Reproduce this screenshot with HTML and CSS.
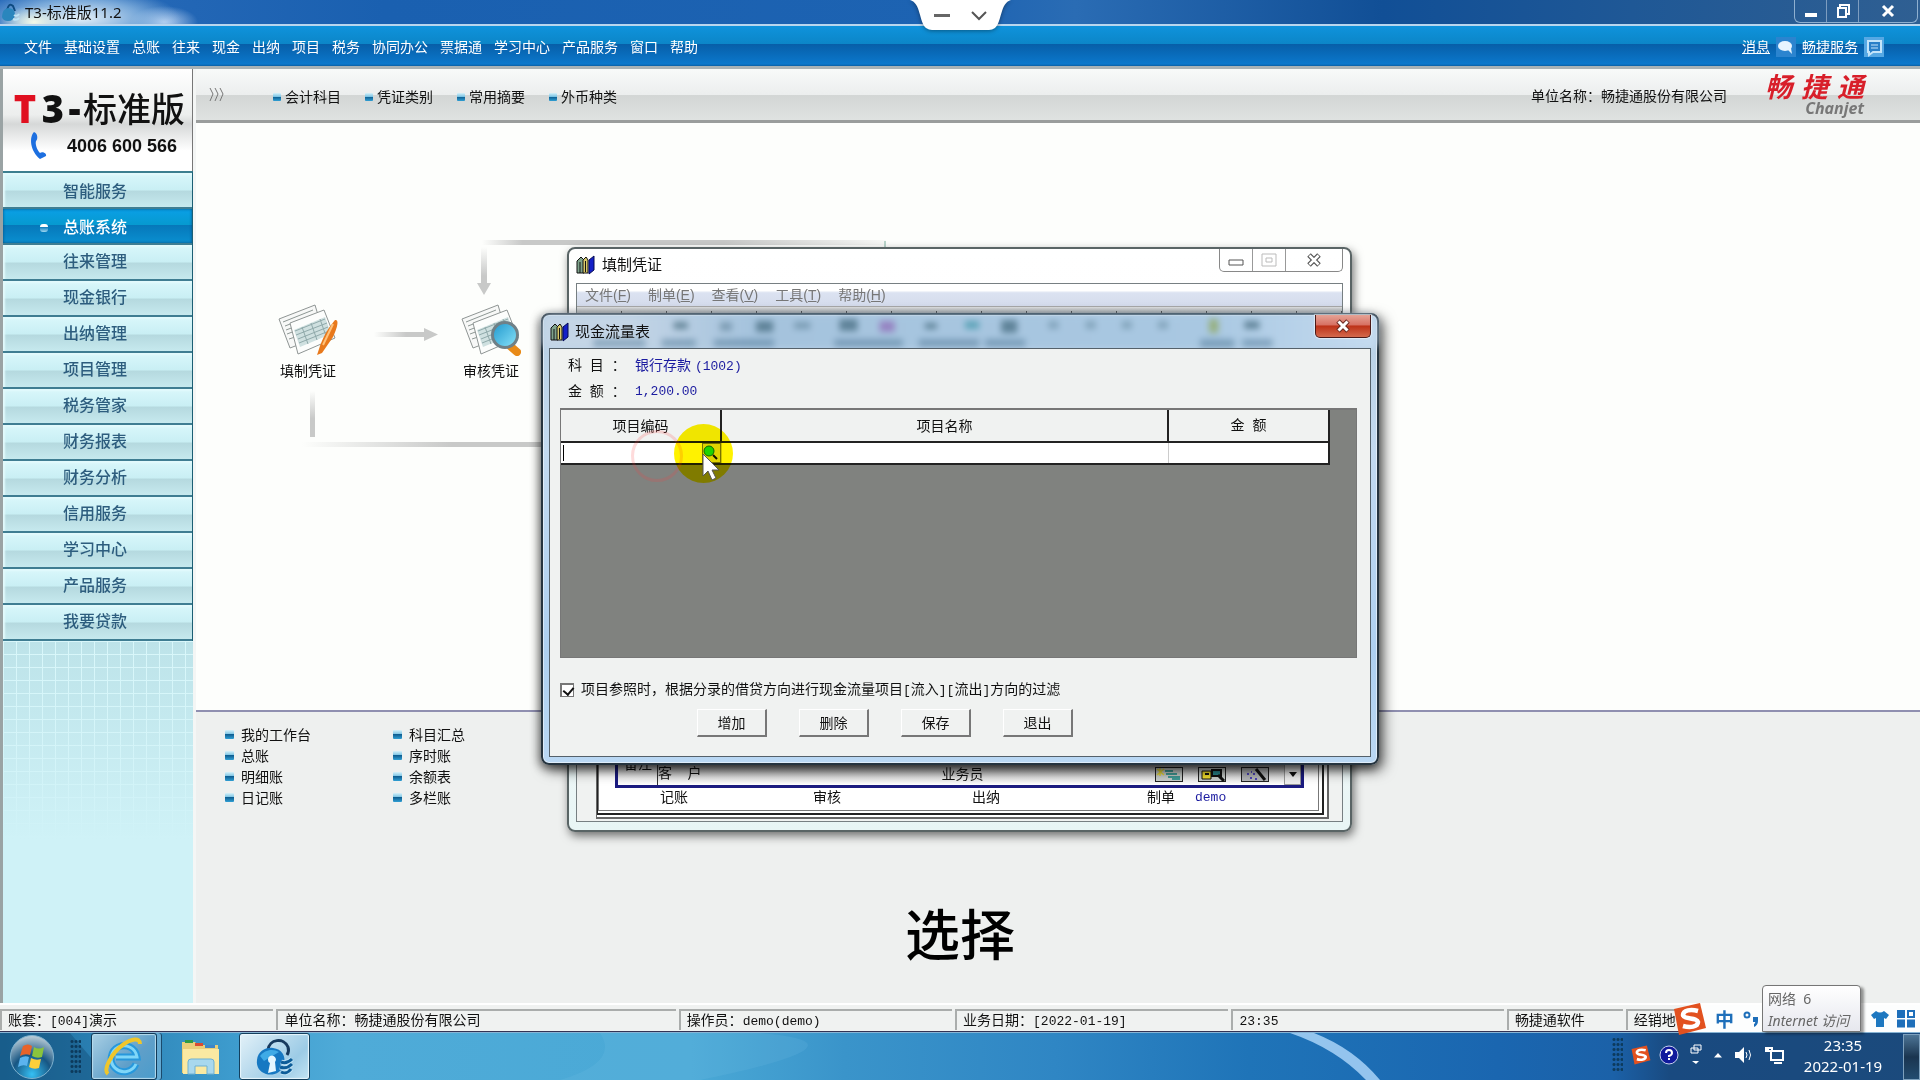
FILE: index.html
```html
<!DOCTYPE html>
<html lang="zh-CN">
<head>
<meta charset="utf-8">
<title>T3-标准版11.2</title>
<link rel="stylesheet" href="styles.css">
</head>
<body>
<svg class="defs" width="0" height="0" aria-hidden="true">
  <defs>
    <linearGradient id="bead" x1="0" y1="0" x2="0" y2="1"><stop offset="0" stop-color="#d8f2fa"/><stop offset=".45" stop-color="#7cc4e4"/><stop offset=".5" stop-color="#0f5f92"/><stop offset="1" stop-color="#2f9fd4"/></linearGradient>
    <linearGradient id="lens" x1="0" y1="0" x2="1" y2="1"><stop offset="0" stop-color="#1d96cc"/><stop offset="1" stop-color="#8be4fa"/></linearGradient>
    <linearGradient id="fadeL" x1="0" x2="1"><stop offset="0" stop-color="#c8c9c8" stop-opacity="0"/><stop offset=".5" stop-color="#c8c9c8"/></linearGradient>
    <linearGradient id="fadeLR" x1="0" x2="1"><stop offset="0" stop-color="#c8c9c8" stop-opacity="0"/><stop offset=".1" stop-color="#c8c9c8"/><stop offset=".6" stop-color="#c8c9c8"/><stop offset="1" stop-color="#c8c9c8" stop-opacity=".1"/></linearGradient>
    <linearGradient id="fadeT" x1="0" y1="0" x2="0" y2="1"><stop offset="0" stop-color="#c8c9c8" stop-opacity="0"/><stop offset=".6" stop-color="#c8c9c8"/></linearGradient>
    <symbol id="i-bead" viewBox="0 0 9 9"><rect width="9" height="9" rx="1" fill="url(#bead)"/></symbol>
    <symbol id="i-papers" viewBox="0 0 60 52">
      <path d="M1 15 37 1 46 31 12 44Z" fill="#f7f8f7" stroke="#8f9594"/>
      <path d="M5 18 35 6M7 22 20 17M8 26 16 23M9 30 17 27M11 35 17 33" stroke="#8d9794" fill="none"/>
      <path d="M12 19 46 6 57 34 20 50Z" fill="#fcfdfc" stroke="#8f9594"/>
      <path d="M16 26 47 13 53 30 22 43Z" fill="#cfe0e0"/>
      <path d="M17 27 47 15M18 31 49 19M20 35 50 23M21 39 51 27M24 23 30 40M33 19 39 36M42 15 48 32" stroke="#8fa9aa" fill="none"/>
    </symbol>
    <symbol id="i-books" viewBox="0 0 20 20">
      <path d="M1 18V6L5 2 8 5V18Z" fill="#7fa38c" stroke="#111"/><path d="M7 18V5L10 2 12 5V18Z" fill="#d9c96a" stroke="#111"/><path d="M4 7V18M9.500 6V17" stroke="#111"/>
      <path d="M13 5 18 1V15L13 19Z" fill="#1420c8" stroke="#050a50"/>
    </symbol>
    <symbol id="i-s" viewBox="0 0 34 32"><path d="M1 6 27 0 33 25 6 32Z" fill="#e2511f"/><path d="M25 8C18 6 10 7 10 12 11 17 24 14 25 19 25 24 17 25 10 23" fill="none" stroke="#fff" stroke-width="4.500"/></symbol>
    <symbol id="i-lock" viewBox="0 0 38 38"><path d="M12 12C13 1 28-1 32 9 33 12 33 14 31 17" fill="none" stroke="#173a5e" stroke-width="3"/><path d="M1 22C2 13 10 9 17 10 26 11 30 18 28 26 26 35 17 38 10 36 4 34 0 29 1 22Z" fill="#1678c2"/><path d="M4 18C8 12 17 10 23 14L8 23Z" fill="#3faae6"/><path d="M14 18a4 4 0 0 1 5 6l1 9-8 2 2-10a4 4 0 0 1 0-7Z" fill="#e4f6ff"/><path d="M25 24c5 2 8 0 11-3M24 29c5 2 9 0 12-3M25 34c4 2 8 0 10-3" stroke="#bfe2f4" stroke-width="5" fill="none"/><path d="M25 24c5 2 8 0 11-3M24 29c5 2 9 0 12-3M25 34c4 2 8 0 10-3" stroke="#0d5d99" stroke-width="3" fill="none"/></symbol>
    <symbol id="i-lock-mini" viewBox="0 0 20 20"><path d="M7 8Q9 0 13 4L15 9" fill="none" stroke="#0e4a80" stroke-width="2"/><path d="M2 15Q2 7 8 6 15 6 15 13 14 19 8 19 3 19 2 15Z" fill="#2a86bd"/><path d="M14 13q3 2 5-1M13 17q4 2 6-1" stroke="#bfe4f5" stroke-width="2" fill="none"/></symbol>
  </defs>
</svg>

<div class="desktop">
  <header class="titlebar">
    <div class="caption">
      <svg width="20" height="20"><use href="#i-lock-mini"/></svg>
      <h1>T3-标准版11.2</h1>
    </div>
    <div class="sysbuttons">
      <button aria-label="最小化"><svg width="14" height="14"><path d="M1 9h12v4H1z" fill="#fff"/></svg></button>
      <button aria-label="还原"><svg width="14" height="14" fill="none" stroke="#fff" stroke-width="2"><path d="M4 3V1h9v9h-2"/><path d="M2 4h8v9H2z"/></svg></button>
      <button class="wide" aria-label="关闭"><svg width="14" height="14"><path d="M2 2 12 12M12 2 2 12" stroke="#fff" stroke-width="3"/></svg></button>
    </div>
  </header>

  <nav class="menubar">
    <div class="menus">
      <a href="#">文件</a><a href="#">基础设置</a><a href="#">总账</a><a href="#">往来</a><a href="#">现金</a><a href="#">出纳</a><a href="#">项目</a><a href="#">税务</a><a href="#">协同办公</a><a href="#">票据通</a><a href="#">学习中心</a><a href="#">产品服务</a><a href="#">窗口</a><a href="#">帮助</a>
    </div>
    <div class="services">
      <a href="#">消息</a>
      <svg width="20" height="20"><rect width="20" height="20" fill="#2b84cf"/><ellipse cx="9" cy="9" rx="7" ry="5" fill="#e6f4ff"/><path d="M11 12l5 5-1-6z" fill="#e6f4ff"/></svg>
      <a href="#">畅捷服务</a>
      <svg width="20" height="20"><rect width="20" height="20" fill="#56a8e4"/><path d="M4 4h13v11H9l-4 3v-3H4z" fill="#2a7fc8" stroke="#c4e4fa" stroke-width="2"/><path d="M7 8h7M7 11h7" stroke="#c4e4fa"/></svg>
    </div>
  </nav>

  <div class="workspace">
    <aside class="sidebar">
      <div class="brand">
        <div class="brandname"><b class="red">T</b><b>3</b><b class="dash">-</b><span>标准版</span></div>
        <div class="phone">
          <svg width="20" height="30"><path d="M5 1C0 6 1 20 11 28L17 25C18 22 13 20 11 22 8 19 6 13 7 10 9 9 9 2 5 1Z" fill="#1d6fe0"/></svg>
          <span>4006 600 566</span>
        </div>
      </div>
      <nav class="modules">
        <a href="#">智能服务</a>
        <a href="#" class="active">总账系统</a>
        <a href="#">往来管理</a><a href="#">现金银行</a><a href="#">出纳管理</a><a href="#">项目管理</a><a href="#">税务管家</a><a href="#">财务报表</a><a href="#">财务分析</a><a href="#">信用服务</a><a href="#">学习中心</a><a href="#">产品服务</a><a href="#">我要贷款</a>
      </nav>
      <div class="tiles"></div>
    </aside>

    <main class="content">
      <div class="toolbar">
        <svg class="chevrons" width="16" height="16" fill="none" stroke="#777"><path d="M1 1l3 6-3 7M6 1l3 6-3 7M11 1l3 6-3 7"/></svg>
        <div class="shortcuts">
          <a href="#"><svg width="8" height="8"><use href="#i-bead"/></svg>会计科目</a>
          <a href="#"><svg width="8" height="8"><use href="#i-bead"/></svg>凭证类别</a>
          <a href="#"><svg width="8" height="8"><use href="#i-bead"/></svg>常用摘要</a>
          <a href="#"><svg width="8" height="8"><use href="#i-bead"/></svg>外币种类</a>
        </div>
        <div class="company">单位名称：畅捷通股份有限公司</div>
        <div class="logo">
          <div class="logocn"><span>畅</span><span>捷</span><span>通</span></div>
          <div class="logoen">Chanjet</div>
        </div>
      </div>

      <section class="canvas">
        <svg class="links" width="720" height="360">
          <path d="M286 117h404v5H286z" fill="url(#fadeLR)"/>
          <path d="M285 124h6v36h4l-7 12-7-12h4z" fill="url(#fadeT)"/>
          <path d="M688 118h2v26h-2z" fill="#b9d5cb"/>
          <path d="M178 209h50v-4l14 6.500-14 6.500v-4h-50z" fill="url(#fadeL)"/>
          <path d="M114 268h5v46h-5z" fill="url(#fadeT)"/>
          <path d="M106 319h300v5H106z" fill="url(#fadeL)"/>
        </svg>
        <a href="#" class="node node-fill">
          <svg width="60" height="52"><use href="#i-papers"/><path d="M57 16C61 15 60 22 55 33L44 49 39 51 41 45C44 35 50 24 57 16Z" fill="#e8791c"/><path d="M55 20 45 41" stroke="#ffc27a" stroke-width="2"/></svg>
          填制凭证
        </a>
        <a href="#" class="node node-audit">
          <svg width="60" height="52"><use href="#i-papers"/><path d="M48 41l8 7" stroke="#e88a18" stroke-width="8" stroke-linecap="round"/><circle cx="44" cy="31" r="12.500" fill="url(#lens)" stroke="#6f8087" stroke-width="3"/></svg>
          审核凭证
        </a>
      </section>

      <section class="reports">
        <ul>
          <li><svg width="9" height="9"><use href="#i-bead"/></svg><a href="#">我的工作台</a></li>
          <li><svg width="9" height="9"><use href="#i-bead"/></svg><a href="#">总账</a></li>
          <li><svg width="9" height="9"><use href="#i-bead"/></svg><a href="#">明细账</a></li>
          <li><svg width="9" height="9"><use href="#i-bead"/></svg><a href="#">日记账</a></li>
        </ul>
        <ul>
          <li><svg width="9" height="9"><use href="#i-bead"/></svg><a href="#">科目汇总</a></li>
          <li><svg width="9" height="9"><use href="#i-bead"/></svg><a href="#">序时账</a></li>
          <li><svg width="9" height="9"><use href="#i-bead"/></svg><a href="#">余额表</a></li>
          <li><svg width="9" height="9"><use href="#i-bead"/></svg><a href="#">多栏账</a></li>
        </ul>
      </section>
    </main>
  </div>

  <footer class="statusbar">
    <div>账套：<span class="mono">[004]</span>演示</div>
    <div>单位名称：畅捷通股份有限公司</div>
    <div>操作员：<span class="mono">demo(demo)</span></div>
    <div>业务日期：<span class="mono">[2022-01-19]</span></div>
    <div><span class="mono">23:35</span></div>
    <div>畅捷通软件</div>
    <div>经销地</div>
  </footer>

  <div class="taskbar">
    <svg class="streaks" viewBox="0 0 1920 48" preserveAspectRatio="none"><path d="M0 0H70L110 48H0Z" fill="#0c3f66" opacity=".35"/><path d="M600 0H760Q880 10 700 48H560Q620 30 600 0Z" fill="#8fd0f0" opacity=".12"/><path d="M1290 0h24q40 16 66 48h-14q-30-32-76-48Z" fill="#a9d4f8" opacity=".85"/></svg>
    <button class="start" aria-label="开始">
      <svg width="46" height="46"><defs><radialGradient id="orb" cx=".5" cy=".9" r=".9"><stop offset="0" stop-color="#35c0f4"/><stop offset=".5" stop-color="#175683"/><stop offset="1" stop-color="#c0d0da"/></radialGradient></defs><circle cx="23" cy="23" r="21.500" fill="url(#orb)" stroke="#7fb2cf"/><path d="M14 12q5-3 9 0l-2 9q-5-2-10 1z" fill="#e8632a"/><path d="M25 13q5 3 10 0l-2 10q-5 2-10-1z" fill="#8ac43c"/><path d="M11 24q5-3 9-1l-2 9q-4-2-9 1z" fill="#5bb3ee"/><path d="M22 24q5 3 10 1l-2 9q-5 2-10-1z" fill="#fccf3a"/></svg>
    </button>
    <i class="grip"></i>
    <button class="task stacked" aria-label="Internet Explorer">
      <svg width="42" height="40"><path d="M33 27A13 13 0 1 1 34 20H13" fill="none" stroke="#2798dc" stroke-width="7"/><path d="M33 27A13 13 0 1 1 34 20H13" fill="none" stroke="#7fd6f8" stroke-width="3"/><path d="M5 37C0 33 8 16 21 7 28 2 37 0 37 7" fill="none" stroke="#efc62b" stroke-width="4"/></svg>
    </button>
    <button class="task plain" aria-label="资源管理器">
      <svg width="40" height="38"><path d="M1 4h13l3 3h20v28H1z" fill="#e9cf79"/><path d="M4 2h8v3H4z" fill="#2e9b46"/><path d="M14 5h8v3h-8z" fill="#d84b32"/><path d="M24 7h10v3H24z" fill="#3d86c8"/><path d="M2 11h36v25H2z" fill="#fae9a2"/><path d="M7 36V24q0-3 3-3h20q3 0 3 3v12h-7v-8H14v8z" fill="#a8d8ee" stroke="#6fb1d3"/></svg>
    </button>
    <button class="task current" aria-label="T3"><svg width="40" height="38"><use href="#i-lock"/></svg></button>
    <div class="tray">
      <i class="grip"></i>
      <svg class="tray-s" width="20" height="20"><use href="#i-s"/></svg>
      <svg width="20" height="20"><circle cx="10" cy="10" r="9" fill="#101a9c" stroke="#c9d0f0"/><path d="M7 8q0-3 3-3t3 3q0 2-3 3v1M10 13v2" fill="none" stroke="#fff" stroke-width="2"/></svg>
      <svg width="12" height="22"><path d="M4 1h7v5H4zM1 4h7v5H1z" fill="#1f4f86" stroke="#fff"/><path d="M2 17h7l-3 3z" fill="#fff"/></svg>
      <svg width="10" height="6"><path d="M1 5.500 5 1 9 5.500z" fill="#fff"/></svg>
      <svg width="20" height="20"><path d="M1 7h4l5-5v16l-5-5H1z" fill="#fff"/><path d="M12 7q2 3 0 6M15 5q3 5 0 10" fill="none" stroke="#fff"/></svg>
      <svg width="20" height="20" fill="none" stroke="#fff" stroke-width="2"><path d="M6 6h12v9H6zM9 18h8M3 2v5M1 3h6v3H1z"/></svg>
      <div class="clock"><span>23:35</span><span>2022-01-19</span></div>
      <button class="peek" aria-label="显示桌面"></button>
    </div>
  </div>

  <section class="window voucher">
    <div class="wtitle">
      <svg width="20" height="20"><use href="#i-books"/></svg><span>填制凭证</span>
      <div class="wbuttons">
        <button aria-label="最小化"><svg width="16" height="14"><path d="M1 7h14v5H1z" fill="#fff" stroke="#555"/></svg></button>
        <button aria-label="最大化" disabled><svg width="16" height="14" fill="none" stroke="#bbb"><path d="M1 1h14v12H1zM5 5h6v4H5z"/></svg></button>
        <button class="wide" aria-label="关闭"><svg width="16" height="14"><path d="M3 2 13 12M13 2 3 12" stroke="#555" stroke-width="5"/><path d="M3.500 2.500 12.500 11.500M12.500 2.500 3.500 11.500" stroke="#fff" stroke-width="2.500"/></svg></button>
      </div>
    </div>
    <div class="vclient">
      <nav class="vmenu"><a href="#">文件(<u>F</u>)</a><a href="#">制单(<u>E</u>)</a><a href="#">查看(<u>V</u>)</a><a href="#">工具(<u>T</u>)</a><a href="#">帮助(<u>H</u>)</a></nav>
      <div class="vtools"></div>
      <div class="vbody">
        <div class="sheet3"><div class="sheet2"><div class="paper">
          <div class="frame">
            <div class="note">备注</div>
            <div class="fields"><span>客<span class="mono">&nbsp;&nbsp;</span>户</span><span class="clerk">业务员</span>
              <div class="tools">
                <button aria-label="新增"><svg width="28" height="15"><rect x=".5" y=".5" width="27" height="14" fill="#c9cecb" stroke="#222"/><path d="M10 4h8M11 7h11M13 10h12M17 12h8" stroke="#168a86" stroke-width="1.500"/><path d="M2 2l7 6M9 2 2 8M5 1v8" stroke="#e8d935" stroke-width="1.500"/></svg></button>
                <button aria-label="查找"><svg width="28" height="15"><rect x=".5" y=".5" width="27" height="14" fill="#c9cecb" stroke="#222"/><path d="M4 4h9v8H4z" fill="#f2df2e" stroke="#111"/><path d="M7 7h4M14 3h9v6h-9z" fill="#27868c" stroke="#111" stroke-width="2"/><path d="M20 8l6 6" stroke="#111" stroke-width="3"/></svg></button>
                <button aria-label="向导"><svg width="28" height="15"><rect x=".5" y=".5" width="27" height="14" fill="#b4b6b8" stroke="#222"/><path d="M15 2l9 11" stroke="#111" stroke-width="3"/><path d="M6 7h2M9 11h2M12 7h2M14 12h2M10 5h1" stroke="#4d43b4" stroke-width="2"/></svg></button>
                <button class="drop" aria-label="下拉"><svg width="8" height="5"><path d="M0 0h8L4 5z" fill="#111"/></svg></button>
              </div>
            </div>
          </div>
          <div class="signs"><span>记账</span><span>审核</span><span>出纳</span><span>制单</span><span class="mono blue">demo</span></div>
        </div></div></div>
      </div>
    </div>
  </section>

  <section class="window dialog" role="dialog" aria-label="现金流量表">
    <svg class="ghost" viewBox="0 0 830 34" preserveAspectRatio="none" aria-hidden="true">
      <g fill="#46708f" opacity=".45"><rect x="50" y="24" width="52" height="8"/><rect x="118" y="24" width="34" height="8"/><rect x="170" y="24" width="60" height="8"/><rect x="290" y="24" width="68" height="8"/><rect x="374" y="24" width="60" height="8"/><rect x="440" y="24" width="40" height="8"/><rect x="654" y="24" width="34" height="9"/><rect x="696" y="24" width="30" height="8"/></g>
      <g fill="#31596c" opacity=".6"><rect x="212" y="6" width="17" height="11"/><rect x="295" y="4" width="18" height="12"/><rect x="335" y="6" width="15" height="11" fill="#8b58b0"/><rect x="380" y="8" width="12" height="6"/><rect x="420" y="6" width="14" height="8" fill="#2f8fa0"/><rect x="456" y="5" width="16" height="13"/><rect x="130" y="7" width="14" height="7"/><rect x="176" y="7" width="12" height="9" opacity=".6"/><rect x="250" y="7" width="16" height="7" opacity=".6"/><rect x="503" y="6" width="10" height="8" opacity=".5"/><rect x="540" y="6" width="10" height="8" opacity=".5"/><rect x="576" y="6" width="10" height="8" opacity=".5"/><rect x="612" y="6" width="10" height="8" opacity=".5"/><rect x="663" y="4" width="9" height="14" fill="#8aa03c"/><rect x="698" y="6" width="15" height="8"/></g>
    </svg>
    <div class="wtitle">
      <svg width="20" height="20"><use href="#i-books"/></svg><span>现金流量表</span>
      <button class="redclose" aria-label="关闭"><svg width="16" height="14"><path d="M3 2 13 12M13 2 3 12" stroke="#6b2b22" stroke-width="5"/><path d="M3.500 2.500 12.500 11.500M12.500 2.500 3.500 11.500" stroke="#fff" stroke-width="3"/></svg></button>
    </div>
    <form class="dclient">
      <dl><dt>科<span class="mono">&nbsp;</span>目<span class="mono">&nbsp;</span>：</dt><dd>银行存款 <span class="mono">(1002)</span></dd><dt>金<span class="mono">&nbsp;</span>额<span class="mono">&nbsp;</span>：</dt><dd class="mono">1,200.00</dd></dl>
      <div class="grid">
        <table>
          <colgroup><col class="c1"><col class="c2"><col class="c3"></colgroup>
          <thead><tr><th>项目编码</th><th>项目名称</th><th>金<span class="mono">&nbsp;</span>额</th></tr></thead>
          <tbody><tr><td><div class="lookup"><i class="caret"></i><input type="text" aria-label="项目编码"><button type="button" aria-label="参照"><svg width="17" height="18"><circle cx="6" cy="7" r="5" fill="#1fe01f" stroke="#0a6e12"/><path d="M10 11l4 4" stroke="#111" stroke-width="2"/></svg></button></div></td><td></td><td></td></tr></tbody>
        </table>
      </div>
      <label class="filter"><input type="checkbox" checked><span>项目参照时，根据分录的借贷方向进行现金流量项目<span class="mono">[</span>流入<span class="mono">][</span>流出<span class="mono">]</span>方向的过滤</span></label>
      <div class="actions"><button type="button">增加</button><button type="button">删除</button><button type="button">保存</button><button type="button">退出</button></div>
    </form>
  </section>

  <div class="click-ring"></div>
  <div class="click-spot"></div>
  <svg class="pointer" width="20" height="30"><path d="M1 1V23L6 18 10 27 14 25 10 17H17Z" fill="#fff" stroke="#555"/></svg>

  <div class="pill">
    <svg width="101" height="31"><path d="M0 0h101C90 3 92 22 85 28q-3 2-6 2H22q-3 0-6-2C9 22 11 3 0 0Z" fill="#fff"/><path d="M24 15.500h16" stroke="#666" stroke-width="3"/><path d="M62 12l7 7 7-7" fill="none" stroke="#555" stroke-width="2"/></svg>
  </div>

  <div class="ime">
    <svg class="ime-s" width="34" height="32"><use href="#i-s"/></svg>
    <b>中</b>
    <svg width="16" height="16"><circle cx="4" cy="4" r="2.500" fill="none" stroke="#1e6fba" stroke-width="2"/><path d="M10 6h5v4q0 4-4 6v-3q2-1 1-2h-2z" fill="#1e6fba"/></svg>
    <svg class="shirt" width="18" height="18"><path d="M5 1q4 3 8 0l5 4-3 4-2-1v9H5V8L3 9 0 5z" fill="#1e78c0"/></svg>
    <svg width="18" height="18"><path d="M0 9.500h8v8H0zM10 9.500h8v8h-8zM0 0h8v8H0z" fill="#1e6fba"/><path d="M11 1h6v6h-6z" fill="none" stroke="#1e6fba" stroke-width="2"/></svg>
  </div>
  <div class="nettip"><span>网络&nbsp;&nbsp;6</span><em>Internet 访问</em></div>
  <p class="subtitle">选择</p>
</div>
</body>
</html>
```
FILE: styles.css
```css
* { box-sizing: border-box; }
body { margin: 0; font: 15px/20px "Liberation Sans", "Noto Sans CJK SC", sans-serif; color: #111; }
a { color: inherit; text-decoration: none; }
button { font: inherit; color: inherit; padding: 0; border: 0; background: none; display: flex; align-items: center; justify-content: center; }
svg { display: block; flex: none; }
ul, dl, dd, p, h1 { margin: 0; padding: 0; list-style: none; font-size: inherit; font-weight: inherit; }
.defs { position: absolute; }
.mono { font-family: "Liberation Mono", "Noto Sans CJK SC", monospace; font-size: 13px; }
.blue { color: #1c1ca0; }

.desktop { position: relative; min-height: 100vh; display: flex; flex-direction: column; overflow: hidden; background: #eef0ef; }

.titlebar { height: 26px; display: flex; justify-content: space-between; background: radial-gradient(ellipse 34px 16px at 34px 22px, #f4fae8, transparent), radial-gradient(ellipse 100px 30px at 80px 18px, #e6f2fa, #9cc4e8b0 60%, transparent), radial-gradient(ellipse 34px 16px at 164px 22px, #b9d2f2, transparent), linear-gradient(90deg, #2a6cba, #1a60b0 20%, #1d63b2 50%, #2a6cb4 56%, #114f96 72%, #1f5896 85%, #2f5f92); border-bottom: 2px solid #b9d6ee; }
.caption { display: flex; gap: 5px; align-items: center; font-family: "Noto Sans", "Noto Sans CJK SC", sans-serif; }
.sysbuttons { display: flex; height: 23px; margin-right: 2px; border: 1px solid #8fb0d0; border-top: 0; border-radius: 0 0 6px 6px; }
.sysbuttons button { width: 32px; border-right: 1px solid #7d9dc0; }
.sysbuttons .wide { width: 58px; border-right: 0; }

.menubar { height: 40px; display: flex; justify-content: space-between; align-items: center; padding: 2px 36px 0 24px; color: #fff; font-size: 14px; background: linear-gradient(#0f93dc 0, #0c86c8 44%, #075ea8 45%, #0b78cc 95%, #0a5fa4); }
.menus { display: flex; gap: 12px; }
.services { display: flex; align-items: center; gap: 6px; }
.services a { text-decoration: underline; }

.workspace { flex: 1; display: flex; border-top: 3px solid #a8b2b6; background: #f4f6f5; }
.sidebar { width: 193px; display: flex; flex-direction: column; border-left: 3px solid #9aa3a4; }
.brand { height: 102px; padding: 21px 6px 0 9px; border-right: 1px solid #777; background: linear-gradient(#fff 0, #eceeed 45%, #d6d8d8 54%, #fff 80%); }
.brandname { display: flex; align-items: center; gap: 2px; height: 36px; font: 500 34px/36px "Noto Sans CJK SC", sans-serif; white-space: nowrap; }
.brandname b { width: 26px; font: 800 38px/36px "Open Sans", sans-serif; text-align: center; }
.brandname .dash { width: 13px; }
.red { color: #e01020; }
.phone { display: flex; align-items: center; margin-top: 4px; padding-left: 17px; gap: 18px; font: bold 18px/32px "Liberation Sans", sans-serif; white-space: nowrap; }
.modules { display: flex; flex-direction: column; border-top: 2px solid #3c7f90; border-right: 1px solid #1c5f74; }
.modules a { height: 36px; padding-left: 60px; font-size: 16px; line-height: 34px; font-weight: 500; color: #2d5d7e; border-bottom: 2px solid #3f7d92; background: linear-gradient(#d9f7fb 0, #c9eff4 50%, #b5d9df 53%, #c6e9ee); box-shadow: inset 2px 2px 2px #e3fafc; }
.modules a:nth-child(-n+2) { line-height: 37px; }
.modules .active { position: relative; color: #fff; background: linear-gradient(#0a9fe6, #069ad0 46%, #0678ba 48%, #0a8fd0); box-shadow: inset 0 0 3px #064b7c; }
.active::before { content: ""; position: absolute; left: 37px; top: 15px; width: 8px; height: 8px; border-radius: 3px; background: linear-gradient(#fff 40%, #1580bd 42%, #9fd8f2); }
.tiles { flex: 1; background: linear-gradient(transparent, #cff2f7 55%), repeating-linear-gradient(90deg, #d9f7fa 0 1px, transparent 1px 13px), repeating-linear-gradient(#d9f7fa 0 1px, transparent 1px 13px), #bde3e9; }

.content { flex: 1; display: flex; flex-direction: column; margin-left: 3px; }
.toolbar { height: 54px; display: flex; align-items: center; padding: 0 56px 0 13px; border-bottom: 3px solid #9a9d9c; background: linear-gradient(#f8faf9, #eceeee 50%, #d3d6d5 52%, #dfe2e1); font-size: 14px; }
.chevrons { margin-right: 48px; }
.shortcuts { display: flex; gap: 24px; flex: 1; padding-top: 4px; }
.shortcuts a { display: flex; align-items: center; gap: 4px; }
.company { padding-right: 38px; padding-top: 2px; }
.logo { display: flex; flex-direction: column; align-items: flex-end; }
.logocn { display: flex; gap: 9px; font: italic bold 27px/26px "Noto Sans CJK SC", sans-serif; color: #d81f2a; }
.logoen { font: italic bold 16px/18px "Open Sans", sans-serif; color: #777; }

.canvas { position: relative; flex: 2.2; background: #fdfefc; }
.links { position: absolute; left: 0; top: 0; }
.node { position: absolute; display: flex; flex-direction: column; align-items: center; gap: 5px; width: 64px; font-size: 14px; }
.node-fill { left: 80px; top: 181px; }
.node-audit { left: 263px; top: 181px; }
.reports { flex: 1; display: flex; gap: 78px; padding: 12px 29px; border-top: 2px solid #8f8fb0; background: #eef0ef; font-size: 14px; }
.reports li { display: flex; align-items: center; gap: 7px; height: 21px; }
.reports ul { width: 90px; }

.statusbar { height: 29px; display: grid; grid-template-columns: 276fr 403fr 276fr 276fr 275fr 117fr 297fr; gap: 0 3px; padding-top: 4px; background: #f0f2f1; border-top: 2px solid #fff; border-bottom: 1px solid #335; font-size: 14px; }
.statusbar div { border-left: 2px solid #aaadac; border-top: 2px solid #aaadac; padding-left: 6px; line-height: 19px; height: 21px; white-space: nowrap; }

.taskbar { position: relative; height: 48px; display: flex; align-items: center; background: linear-gradient(90deg, #1f6d9e, #2a7fb2 5%, #3d9bcd 12%, #4fabd8 18%, #4aa9d6 36%, #3a94ca 44%, #2f86c4 55%, #1f74b8 65%, #1a66b0 78%, #1b61a8 84%, #194a80 87%, #1b4a7c 100%); border-top: 1px solid #88b4d4; }
.streaks { position: absolute; inset: 0; width: 100%; height: 100%; }
.taskbar > button, .taskbar > i, .tray { position: relative; }
.start { margin-left: 9px; }
.grip { width: 11px; height: 36px; margin: 0 10px 0 15px; background: radial-gradient(circle, #0c3a5c 1px, transparent 2px) 0 0 / 4px 5px; }
.task { height: 47px; border-radius: 3px; }
.stacked { width: 66px; background: linear-gradient(135deg, #a9cfe4, #5f9fc9 60%, #4a9ccc); border: 1px solid #123a58; box-shadow: inset 0 0 1px 1px #b8dcee, 4px 0 0 #63a9d2, 5px 0 0 #1b4a6c; }
.plain { width: 66px; margin: 0 5px 0 11px; }
.current { width: 71px; background: linear-gradient(135deg, #e3f1f8, #9ccbe6 70%, #c2e4f4); border: 1px solid #14405e; box-shadow: inset 0 0 1px 1px #e9f7fd; }
.tray { margin-left: auto; display: flex; align-items: center; gap: 8px; padding-bottom: 4px; color: #fff; }
.tray .grip { margin: 0; }
.tray svg:not(.tray-s) { margin-left: 3px; }
.tray .tray-s { margin-right: -3px; }
.clock { display: flex; flex-direction: column; align-items: center; width: 100px; font: 15px/21px "Noto Sans", sans-serif; padding-top: 3px; }
.peek { width: 17px; height: 46px; margin: 0 0 -4px 2px; border: 1px solid #7da0bd; background: linear-gradient(#4d7596, #1a3550 50%, #234c70); }

.window { position: absolute; display: flex; flex-direction: column; border-radius: 8px; }
.wtitle { display: flex; align-items: center; gap: 6px; }
.voucher { left: 567px; top: 247px; width: 785px; height: 585px; padding: 0 7px 8px; background: linear-gradient(#fff 0, #fbfdfd 60%, #e8f5f5); border: 2px solid #596465; box-shadow: 2px 4px 10px #0008; }
.voucher .wtitle { height: 34px; padding-bottom: 2px; }
.wbuttons { display: flex; align-self: flex-start; margin-left: auto; height: 23px; border: 1px solid #888; border-top: 0; border-radius: 0 0 5px 5px; }
.wbuttons button { width: 33px; border-right: 1px solid #999; }
.wbuttons .wide { width: 56px; border: 0; }
.vclient { flex: 1; display: flex; flex-direction: column; border: 1px solid #777f82; background: #f0f2f1; }
.vmenu { height: 23px; display: flex; gap: 17px; padding: 1px 8px; font-size: 14px; color: #777; background: linear-gradient(#fff 30%, #dbe2f1 40%, #d5dcec); border-bottom: 1px solid #aaa; }
.vtools { height: 44px; background: repeating-linear-gradient(90deg, transparent 0 44px, #444 44px 45px) 0 4px / 100% 36px no-repeat, linear-gradient(#e2e4e5, #a8aaab 20%, #eee); }
.vbody { flex: 1; display: flex; padding: 0 13px 2px 19px; background: #f0f2f1; }
.sheet3, .sheet2 { flex: 1; display: flex; background: #fff; border: solid #222; border-width: 0 2px 2px 1px; padding: 0 3px 2px 0; }
.sheet3 { border-color: #666; }
.paper { flex: 1; display: flex; flex-direction: column; justify-content: flex-end; border: solid #777; border-width: 0 1px 1px; background: #fff; padding-right: 14px; }
.frame { display: flex; flex: 1; margin-left: 16px; border: solid #1b1b80; border-width: 0 3px 3px; align-items: flex-end; background: #fff; }
.note { width: 40px; padding: 0 0 13px 6px; border-right: 1px solid #333; line-height: 16px; font-size: 14px; background: linear-gradient(#b8b8b8, #fff); }
.fields { flex: 1; display: flex; align-items: center; height: 22px; background: linear-gradient(#b0b0b0, #fff); font-size: 14px; }
.clerk { margin-left: 240px; }
.tools { display: flex; gap: 15px; margin-left: auto; align-items: center; }
.tools .drop { width: 17px; height: 22px; background: #eee; border: 1px solid #999; }
.signs { height: 22px; display: grid; grid-template-columns: 153px 159px 175px 48px 1fr; padding-left: 61px; line-height: 19px; font-size: 14px; }

.dialog { left: 541px; top: 313px; width: 838px; height: 452px; padding: 0 6px 6px; border: 2px solid #26343f; background: linear-gradient(#b7cfe3, #c3daf0 30%, #aed0f0 75%, #bad8f4); box-shadow: 0 0 0 1px #fff8 inset, 4px 5px 14px #000a, -2px 3px 10px #0007; }
.ghost { position: absolute; inset: 0 0 auto; width: 100%; height: 34px; filter: blur(3px); background: linear-gradient(90deg, #c4d5e6 10%, #a5c3dd 25%, #a9c8e2 80%, #c5dbf0); border-radius: 8px; }
.dialog .wtitle { position: relative; height: 33px; padding-left: 1px; gap: 5px; }
.redclose { align-self: flex-start; margin-left: auto; width: 56px; height: 23px; border: 1px solid #4b1a18; border-top: 0; border-radius: 0 0 5px 5px; background: linear-gradient(#e6a396, #d77163 45%, #bd3218 50%, #d4694c); box-shadow: 0 0 1px 1px #fff8; }
.dclient { position: relative; flex: 1; display: flex; flex-direction: column; padding: 4px 13px 0 10px; border: 1px solid #55616a; background: #f0f2f1; font-size: 14px; }
dl { display: grid; grid-template-columns: 67px 1fr; line-height: 25px; padding-left: 8px; }
dd { color: #1c1ca0; }
.grid { height: 250px; margin-top: 3px; background: #80827f; border: solid #777; border-width: 2px 1px 1px; }
table { border-collapse: collapse; table-layout: fixed; width: 768px; }
.c1 { width: 160px; } .c2 { width: 447px; } .c3 { width: 161px; }
th { height: 32px; padding: 0; font-weight: 400; font-size: 14px; background: #f0f2f1; border: 1px solid #222; border-width: 0 2px 2px 0; }
td { height: 22px; padding: 0; background: #fff; border: solid #222; border-width: 0 1px 2px 0; border-right-color: #ccc; }
td:last-child { border-right: 2px solid #222; }
.lookup { display: flex; align-items: center; height: 20px; }
.lookup input { flex: 1; width: 60px; height: 18px; border: 0; padding: 0; background: none; }
.caret { width: 1px; height: 16px; margin-left: 2px; background: #000; }
.lookup button { width: 19px; height: 20px; background: #e0e0d8; border: 1px solid #777; }
.filter { display: flex; align-items: center; gap: 7px; margin-top: 21px; }
.filter input { appearance: none; width: 14px; height: 14px; margin: 0; background: #fff; border: solid #777; border-width: 2px 1px 1px 2px; position: relative; }
.filter input:checked::after { content: ""; position: absolute; left: 3px; top: 0; width: 5px; height: 8px; border: solid #111; border-width: 0 2px 2px 0; rotate: 40deg; }
.actions { display: flex; gap: 32px; margin: 8px 0 0 137px; }
.actions button { width: 70px; height: 28px; border: solid; border-width: 1px 2px 2px 1px; border-color: #fff #777 #777 #fff; background: #f0f2f1; }

.click-spot { position: absolute; left: 674px; top: 424px; width: 59px; height: 59px; border-radius: 50%; background: #fff200; mix-blend-mode: multiply; }
.click-ring { position: absolute; left: 631px; top: 430px; width: 52px; height: 52px; border-radius: 50%; border: 3px solid #f8404030; }
.pointer { position: absolute; left: 702px; top: 453px; }
.pill { position: absolute; left: 910px; top: 0; filter: drop-shadow(0 1px 2px #0006); }
.ime { position: absolute; right: 0; bottom: 48px; height: 27px; width: 250px; display: flex; align-items: center; gap: 8px; padding: 0 5px 0 3px; background: linear-gradient(90deg, transparent 18px, #fdfefe 18px); }
.ime b { font: bold 19px/24px "Noto Sans CJK SC", sans-serif; color: #1e6fba; margin-right: 1px; }
.shirt { margin-left: auto; }
.nettip { position: absolute; left: 1762px; bottom: 48px; width: 99px; height: 47px; display: flex; flex-direction: column; padding: 2px 5px; font: 14px/22px "Noto Sans", "Noto Sans CJK SC", sans-serif; color: #666; white-space: nowrap; border: 1px solid #767676; border-radius: 4px 4px 0 0; background: linear-gradient(#fff, #e6e7ee); box-shadow: 3px 2px 3px #0006; }
.subtitle { position: absolute; left: 0; right: 0; top: 891px; text-align: center; font: 500 55px/80px "Noto Sans CJK SC", sans-serif; color: #000; }
```
